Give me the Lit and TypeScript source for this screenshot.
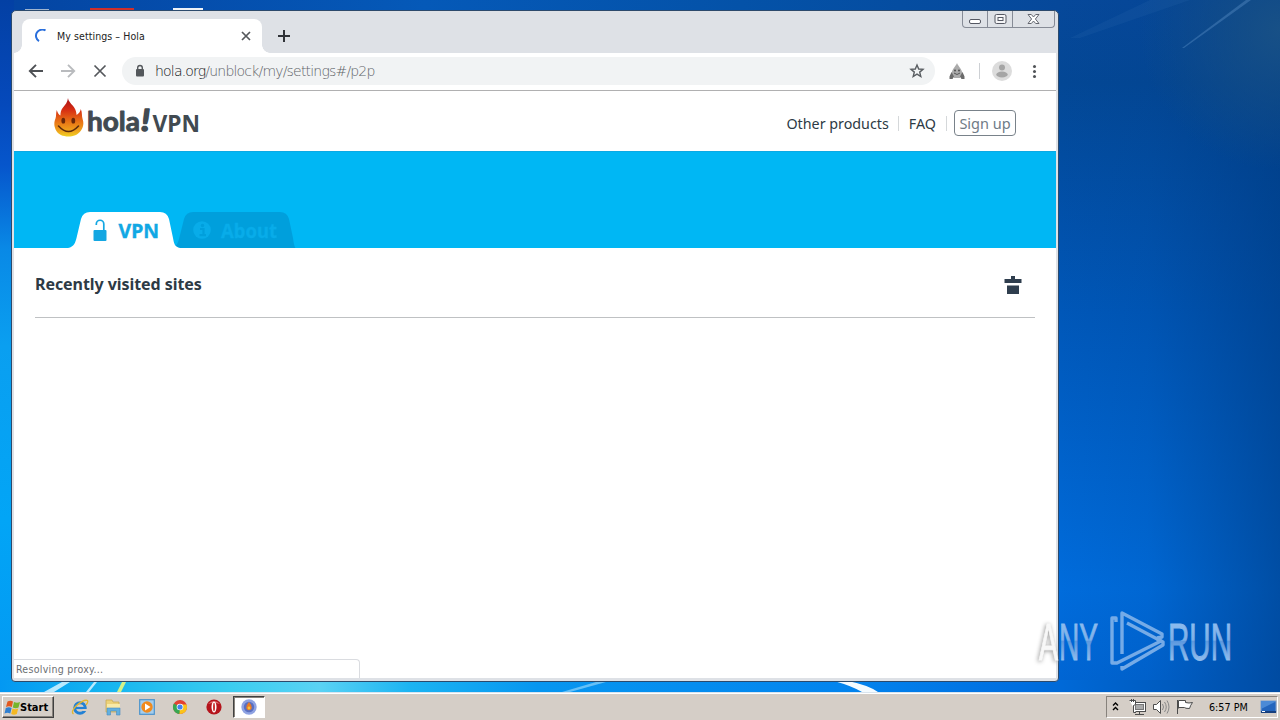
import { LitElement, html, css } from "lit";
import { customElement } from "lit/decorators.js";

@customElement("hola-logo")
class HolaLogo extends LitElement {
  static styles = css`
    :host { display: flex; align-items: flex-start; color: #414a51; }
    .flame { display: block; width: 30px; height: 40px; }
    .word { display: block; width: 118px; height: 40px; overflow: visible; }
  `;
  render() {
    return html`<svg class="flame" viewBox="0 0 30 40">
        <defs>
          <linearGradient id="f" x1="0" y1="0" x2="0" y2="1">
            <stop offset="0" stop-color="#a81218" /><stop offset=".3" stop-color="#d62d13" />
            <stop offset=".62" stop-color="#e97416" /><stop offset=".85" stop-color="#efa31c" /><stop offset="1" stop-color="#f0d023" />
          </linearGradient>
        </defs>
        <path fill="url(#f)" d="M14 0C14.500 4 18 6 20.500 10C22 12.500 22.300 14.500 22.600 17C24.800 15.500 26.500 13.500 26.800 11C28.500 15 27.600 18 28.600 21C30 25 29.500 29 27 32.500C24 37 19 38.500 14.500 38.500C9 38.500 4 36.500 1.800 32C-.5 27.500 .3 23.500 1.500 20.500C2.500 17.500 1.700 15.500 2.800 12C3.600 15 4.700 16.500 6.400 17.500C6.500 14 7 12 9 9.500C11.500 6.500 13.500 4 14 0Z" />
        <ellipse cx="9.300" cy="22.700" rx="1.900" ry="2.900" fill="#6b2708" /><ellipse cx="19.300" cy="22.700" rx="1.900" ry="2.900" fill="#6b2708" />
        <path d="M4.500 28Q14.500 39 24.500 28" fill="none" stroke="#5d2a0c" stroke-width="1.600" stroke-linecap="round" />
      </svg>
      <svg class="word" viewBox="0 0 118 40">
        <g fill="#414a51" stroke="#414a51" font-weight="700" stroke-linejoin="round">
          <text x="3" y="33" font-family="Lato, sans-serif" font-size="27" stroke-width=".9" textLength="53" lengthAdjust="spacingAndGlyphs">hola</text>
          <text x="57" y="33" font-family="Lato, sans-serif" font-size="31" font-style="italic" stroke-width="1.500" textLength="9" lengthAdjust="spacingAndGlyphs">!</text>
          <text x="68.500" y="34" font-family="Noto Sans, sans-serif" font-size="23.500" stroke-width="0" textLength="47.500" lengthAdjust="spacingAndGlyphs">VPN</text>
        </g>
      </svg>`;
  }
}

@customElement("browser-window")
class BrowserWindow extends LitElement {
  static styles = css`
    :host {
      box-sizing: border-box; display: flex; flex-direction: column; border: 1px solid #2c4a6c;
      border-radius: 5px 5px 4px 4px; background: #dee1e6; padding: 0 2px 3px;
      font-family: "DejaVu Sans Condensed", "DejaVu Sans", sans-serif; font-size: 10.500px; color: #222;
      overflow: hidden;
    }
    svg { display: block; flex: none; }
    .strip { display: flex; height: 42px; flex: none; align-items: flex-start; }
    .tab {
      box-sizing: border-box; display: flex; align-items: center; height: 34px; width: 240px; margin: 8px 0 0 8px;
      background: #fff; border-radius: 8px 8px 0 0; padding: 0 10px 0 13px; position: relative;
    }
    .tab::before, .tab::after { content: ""; position: absolute; bottom: 0; width: 8px; height: 8px; }
    .tab::before { left: -8px; background: radial-gradient(circle at 0 0, transparent 7.500px, #fff 8px); }
    .tab::after { right: -8px; background: radial-gradient(circle at 100% 0, transparent 7.500px, #fff 8px); }
    .title { margin-left: 8px; flex: 1; white-space: nowrap; letter-spacing: 0.080px; }
    .plus { margin: 18px 0 0 15px; }
    .controls { display: flex; margin-left: auto; margin-right: 1px; border: 1px solid #868b96; border-top: 0; border-radius: 0 0 4px 4px; height: 16px; }
    .controls div { display: flex; align-items: center; justify-content: center; width: 24px; }
    .controls div + div { border-left: 1px solid #868b96; }
    .controls .wide { width: 41px; }
    .toolbar { display: flex; align-items: center; box-sizing: border-box; height: 38px; padding-bottom: 1px; flex: none; background: #fff; border-bottom: 1px solid #b0b0b1; padding-left: 14px; }
    .nav { display: flex; gap: 16px; }
    .omnibox { display: flex; align-items: center; box-sizing: border-box; width: 813px; height: 28px; margin-left: 14px; background: #f1f3f4; border-radius: 14px; padding: 0 9px 0 10px; }
    .url { flex: 1; margin-left: 7px; font: 200 14px "DejaVu Sans", sans-serif; letter-spacing: -0.810px; color: #5f6468; white-space: nowrap; }
    .url b { color: #101214; font-weight: 200; }
    .ext { margin-left: 13px; }
    .sep { width: 1px; height: 16px; background: #cdd0d4; margin: 0 12px 0 13px; }
    .kebab { margin-left: 14px; }
    .page { display: flex; flex-direction: column; flex: 1; min-height: 0; background: #fff; color: #2d3a45; font-family: "Noto Sans", sans-serif; }
    .head { display: flex; height: 60px; flex: none; box-sizing: border-box; padding: 7px 40px 0 40px; }
    .links { display: flex; align-items: center; margin-left: auto; height: 50px; font-size: 14.300px; }
    .bar { width: 1px; height: 15px; background: #d5d8da; margin: 0 10px 0 9px; }
    .bar.last { margin: 0 7px 0 10px; }
    .signup { box-sizing: border-box; border: 1px solid #79828a; border-radius: 4px; width: 62px; height: 26px; line-height: 24px; text-align: center; color: #6f7b86; font-size: 14.500px; }
    .hero { display: flex; align-items: flex-end; height: 97px; flex: none; background: #00b7f4; border-top: 1px solid #0aa9e4; box-sizing: border-box; padding-left: 54px; }
    .hero svg text { font: 700 20px "Noto Sans", sans-serif; }
    .recent { display: flex; justify-content: space-between; align-items: center; box-sizing: border-box; margin: 0 21px; height: 70px; border-bottom: 1px solid #bfc1c3; padding: 4px 12px 0 0; font-size: 16px; font-weight: 700; letter-spacing: -0.060px; }
    .recent span { padding-bottom: 1px; }
    .status { box-sizing: border-box; margin-top: auto; width: 346px; height: 19px; border: 1px solid #dadce0; border-width: 1px 1px 0 0; border-radius: 0 4px 0 0; padding-left: 2px; color: #6b6f73; font: 10.500px/19px "DejaVu Sans Condensed", sans-serif; letter-spacing: 0.280px; }
  `;
  render() {
    return html`
      <div class="strip">
        <div class="tab">
          <svg width="14" height="14" viewBox="0 0 14 14"><path d="M10.500 1.500A6 6 0 0 0 4 12.200" fill="none" stroke="#2a6fdc" stroke-width="2" /></svg>
          <span class="title">My settings – Hola</span>
          <svg width="12" height="12" viewBox="0 0 12 12"><path d="M2 2L10 10M10 2L2 10" stroke="#55585c" stroke-width="1.700" /></svg>
        </div>
        <svg class="plus" width="14" height="14" viewBox="0 0 14 14"><path d="M7 1V13M1 7H13" stroke="#303338" stroke-width="2" /></svg>
        <div class="controls">
          <div><svg width="13" height="14" viewBox="0 0 13 14"><rect x=".5" y="7.500" width="11" height="4" rx="1.500" fill="#fff" stroke="#555863" /></svg></div>
          <div><svg width="13" height="13" viewBox="0 0 13 13"><rect x="1" y="1.500" width="11" height="9" rx="1.500" fill="#f4f4f6" stroke="#555863" /><rect x="4" y="4.500" width="5" height="3" fill="#fff" stroke="#555863" /></svg></div>
          <div class="wide"><svg width="13" height="12" viewBox="0 0 13 12"><path d="M1 1.500H4.300L6.500 4L8.700 1.500H12L8.400 6L12 10.500H8.700L6.500 8L4.300 10.500H1L4.600 6Z" fill="#fff" stroke="#63666f" /></svg></div>
        </div>
      </div>
      <div class="toolbar">
        <div class="nav">
          <svg width="16" height="16" viewBox="0 0 16 16"><path d="M15 8H2M8 1.800L1.800 8L8 14.200" fill="none" stroke="#4e5155" stroke-width="1.900" /></svg>
          <svg width="16" height="16" viewBox="0 0 16 16"><path d="M1 8H14M8 1.800L14.200 8L8 14.200" fill="none" stroke="#b9bbbe" stroke-width="1.900" /></svg>
          <svg width="16" height="16" viewBox="0 0 16 16"><path d="M2.500 2.500L13.500 13.500M13.500 2.500L2.500 13.500" stroke="#55585c" stroke-width="1.700" /></svg>
        </div>
        <div class="omnibox">
          <svg width="16" height="16" viewBox="0 0 16 16"><rect x="4" y="6" width="8" height="7.500" rx="1" fill="#54585c" /><path d="M5.700 6.500V4.800A2.300 2.300 0 0 1 10.300 4.800V6.500" fill="none" stroke="#54585c" stroke-width="1.400" /></svg>
          <span class="url"><b>hola.org</b>/unblock/my/settings#/p2p</span>
          <svg width="18" height="18" viewBox="0 0 18 18"><path d="M9 3L10.700 7L15 7.300L11.700 10.100L12.800 14.500L9 12.100L5.200 14.500L6.300 10.100L3 7.300L7.300 7Z" fill="none" stroke="#5a5e62" stroke-width="1.400" /></svg>
        </div>
        <svg class="ext" width="18" height="18" viewBox="0 0 18 18">
          <path d="M9 1C10 4 14 7 14.500 12L12 16H6L3.500 12C4 7 8 4 9 1Z" fill="#ababab" />
          <path d="M3.500 10L1.500 14.500V17H4.500L6 14.500ZM14.500 10L16.500 14.500V17H13.500L12 14.500Z" fill="#6b6b6b" />
          <circle cx="7" cy="8.500" r="1" fill="#4d4d4d" /><circle cx="11" cy="8.500" r="1" fill="#4d4d4d" /><path d="M6 11Q9 14 12 11" fill="none" stroke="#555" />
        </svg>
        <div class="sep"></div>
        <svg width="20" height="20" viewBox="0 0 20 20"><circle cx="10" cy="10" r="10" fill="#dcdcdc" /><circle cx="10" cy="6.500" r="3" fill="#a5a5a5" /><ellipse cx="10" cy="13.500" rx="5.700" ry="3" fill="#a5a5a5" /></svg>
        <svg class="kebab" width="16" height="16" viewBox="0 0 16 16" fill="#505357"><circle cx="8.500" cy="3.500" r="1.500" /><circle cx="8.500" cy="8.500" r="1.500" /><circle cx="8.500" cy="13.500" r="1.500" /></svg>
      </div>
      <div class="page">
        <div class="head">
          <hola-logo></hola-logo>
          <div class="links"><span>Other products</span><i class="bar"></i><span>FAQ</span><i class="bar last"></i><span class="signup">Sign up</span></div>
        </div>
        <div class="hero">
          <svg width="230" height="37" viewBox="0 0 230 37">
            <path d="M105 37C109 35 110 31 111 28L116 8Q118 1 125 1H212Q219 1 221 8L225 27Q226 35 227.500 37Z" fill="#009fdc" />
            <path d="M0 37C6 36 7.500 31 8.500 27L13 8Q15 1 22 1H92Q99 1 101 8L105 27C106 33 107 36 112 37Z" fill="#fff" />
            <rect x="25.500" y="19" width="13" height="11" rx="1" fill="#14a7e2" />
            <path d="M28.300 14V13A3.700 3.700 0 0 1 35.800 13V19" fill="none" stroke="#14a7e2" stroke-width="1.700" />
            <text x="50.500" y="27" fill="#11a8e4" stroke="#11a8e4" stroke-width=".4" textLength="40.500" lengthAdjust="spacingAndGlyphs">VPN</text>
            <circle cx="134" cy="19" r="8.800" fill="#08ace9" /><circle cx="134.500" cy="14.500" r="1.700" fill="#009fdc" /><path d="M132 18H135.500V24M131.500 24.200H138" fill="none" stroke="#009fdc" stroke-width="2.200" />
            <text x="153" y="27" fill="#08ace9" stroke="#08ace9" stroke-width=".3" textLength="56" lengthAdjust="spacingAndGlyphs">About</text>
          </svg>
        </div>
        <div class="recent"><span>Recently visited sites</span>
          <svg width="20" height="20" viewBox="0 0 20 20"><path d="M1.500 4H8V1H12V4H18.500V8H1.500ZM4 10.500H16V19H4Z" fill="#2f3e4e" /></svg>
        </div>
        <div class="status">Resolving proxy...</div>
      </div>`;
  }
}

@customElement("task-bar")
class TaskBar extends LitElement {
  static styles = css`
    :host { display: flex; align-items: center; box-sizing: border-box; height: 28px; background: #d5cec7; border-top: 1px solid #d9e4ee; box-shadow: inset 0 1px #fff; font: 11px "DejaVu Sans Condensed", sans-serif; color: #000; padding: 1px 2px 0 2px; }
    svg { display: block; flex: none; }
    .start { display: flex; align-items: center; box-sizing: border-box; width: 52px; height: 22px; padding-left: 1px; border: 1px solid; border-color: #fff #404040 #404040 #fff; box-shadow: inset -1px -1px #87827c; font-weight: 700; letter-spacing: 0; }
    .start span { margin-left: -1px; }
    .apps { display: flex; align-items: center; margin-left: 17px; gap: 16px; }
    .opera { margin-left: 1px; }
    .active { box-sizing: border-box; display: flex; align-items: center; justify-content: center; width: 32px; height: 22px; margin-left: -5px; background: #fff; border: 1px solid; border-color: #404040 #fff #fff #404040; box-shadow: inset 1px 1px #87827c; }
    .tray { display: flex; align-items: center; justify-content: space-between; box-sizing: border-box; margin-left: auto; height: 22px; width: 172px; border: 1px solid; border-color: #87827c #fff #fff #87827c; padding: 0 0 0 4px; }
    .status { display: flex; align-items: center; }
    .clock { margin-left: 8px; white-space: nowrap; letter-spacing: 0; font-size: 10.700px; }
  `;
  render() {
    return html`
      <div class="start">
        <svg width="17" height="17" viewBox="0 0 17 17"><path d="M3.500 2.500Q6.500 1 9 2.500L7.800 8Q5 6.500 2 8Z" fill="#e2581f" /><path d="M10 3Q13 4.500 16 3L14.500 8.500Q12 10 8.800 8.500Z" fill="#76b52c" /><path d="M1.800 9Q5 7.500 7.600 9L6.300 14.500Q3.500 13 .5 14.500Z" fill="#2f7fd0" /><path d="M8.500 9.500Q11.500 11 14.200 9.500L12.800 15Q10 16.500 7.200 15Z" fill="#f5b822" /></svg>
        <span>Start</span>
      </div>
      <div class="apps">
        <svg width="18" height="18" viewBox="0 0 18 18"><circle cx="9" cy="10" r="5.300" fill="none" stroke="#2381d4" stroke-width="3" /><path d="M5 10H14.500" stroke="#2381d4" stroke-width="2.200" /><path d="M11.500 12H16" stroke="#d5cec7" stroke-width="2" /><path d="M2.500 16Q-.5 14 5 8Q13 1 16.500 2.500Q17.500 4 15 7" fill="none" stroke="#e2b62e" stroke-width="1.300" /></svg>
        <svg width="18" height="18" viewBox="0 0 18 18"><path d="M1 2H7L8 4H14V14H1Z" fill="#ecd27a" stroke="#c7a64a" stroke-width=".7" /><path d="M2 6H15V10H2Z" fill="#f8eaa8" /><path d="M2 17V10H15V17H11.500V13H5.500V17Z" fill="#62b0df" stroke="#4a8cc0" stroke-width=".6" /></svg>
        <svg width="16" height="16" viewBox="0 0 16 16"><rect x=".7" y=".7" width="14.600" height="14.600" fill="#a5cdec" stroke="#4b93cc" stroke-width="1.200" /><circle cx="8" cy="8" r="5.700" fill="#f08a1d" /><path d="M6 4.500L11.500 8L6 11.500Z" fill="#fff" /></svg>
        <svg width="18" height="16" viewBox="0 0 18 16"><circle cx="9" cy="8" r="7" fill="#e34133" /><path d="M9 8L2.900 4.500A7 7 0 0 0 8 15L12 9.700Z" fill="#38a752" /><path d="M9 8L8.500 15A7 7 0 0 0 15.500 5.500H9Z" fill="#fbc41a" /><circle cx="9" cy="8" r="3.300" fill="#fff" /><circle cx="9" cy="8" r="2.600" fill="#4483ee" /></svg>
        <svg class="opera" width="16" height="16" viewBox="0 0 16 16"><circle cx="8" cy="8" r="7.600" fill="#b5141c" /><path d="M2 5Q8-1 14 5Q8 3 2 5Z" fill="#e06a6c" /><ellipse cx="8" cy="8" rx="2.500" ry="5.500" fill="#fff" /><ellipse cx="8" cy="8" rx="1" ry="4.300" fill="#c33" /></svg>
        <div class="active"><svg width="16" height="16" viewBox="0 0 16 16"><circle cx="8" cy="8" r="7.700" fill="#8ea2e2" /><circle cx="8" cy="8" r="5.200" fill="#5a6fc0" /><path d="M8 3Q11 6 10.800 9A2.900 3 0 0 1 5.200 9Q5 6 8 3Z" fill="#ea7a24" /><circle cx="8" cy="9" r="1.400" fill="#f5c33a" /></svg></div>
      </div>
      <div class="tray">
        <div class="status">
          <svg width="10" height="12" viewBox="0 0 10 12"><path d="M2 4.500L4.500 2L7 4.500M2 9L4.500 6.500L7 9" fill="none" stroke="#000" stroke-width="1.400" /></svg>
          <svg width="80" height="18" viewBox="0 0 80 18" fill="#fff" stroke="#4c4c4c">
            <rect x="12.500" y="4.500" width="12" height="9" /><rect x="14.500" y="6.500" width="8" height="5" fill="#aaa" stroke="#777" /><path d="M14 16.500H23M18.500 13.500V16" /><path d="M8.500 2.500H14.500V6.500L12.500 7.500V14.500H15" /><path d="M10.500 1V4M12.500 1V4" />
            <path d="M32.500 6.500H35.500L39.500 2.500V15.500L35.500 11.500H32.500Z" /><path d="M41.500 6Q43.500 9 41.500 12M43.500 4Q47 9 43.500 14M46 2.500Q50 9 46 15.500" fill="none" stroke="#888" />
            <path d="M57.500 10.500V2.500H64.500V4.500Q68 5.500 71.500 4.500Q69.500 7 68.500 10.500Q64 10.500 63.500 9.500H57.500" /><path d="M56.500 2V16" />
          </svg>
          <span class="clock">6:57 PM</span>
        </div>
        <svg width="17" height="14" viewBox="0 0 17 14"><rect x="1" y="1" width="15" height="11" fill="#2465bd" stroke="#7c9cc9" /><path d="M1 9L15 2V1H1Z" fill="#4c8ad6" /><path d="M1 11H16V13H1Z" fill="#173f7e" /><path d="M2 11H5V12H2Z" fill="#fff" /></svg>
      </div>`;
  }
}

@customElement("app-root")
class AppRoot extends LitElement {
  static styles = css`
    :host { display: flex; flex-direction: column; position: relative; width: 1280px; height: 720px; overflow: hidden; background: #0054b4; }
    .desk { flex: 1; min-height: 0; }
    .desk svg { display: block; }
    browser-window { position: absolute; left: 11px; top: 10px; width: 1048px; height: 672px; }
    .mark { position: absolute; left: 1030px; top: 600px; }
    .over-page { filter: drop-shadow(-1px 1px 2px #999); }
  `;
  render() {
    return html`
      <div class="desk">
        <svg width="1280" height="692" viewBox="0 0 1280 692">
          <defs>
            <linearGradient id="sky" x1="0" y1="0" x2="0" y2="1"><stop offset="0" stop-color="#06489a" /><stop offset=".12" stop-color="#034795" /><stop offset=".45" stop-color="#0057b8" /><stop offset=".85" stop-color="#006cdc" /><stop offset="1" stop-color="#0064d2" /></linearGradient>
            <linearGradient id="edge" x1="1059" y1="0" x2="1280" y2="0" gradientUnits="userSpaceOnUse"><stop offset="0" stop-color="#003a80" stop-opacity="0" /><stop offset=".4" stop-color="#003a80" stop-opacity=".1" /><stop offset="1" stop-color="#003a80" stop-opacity=".6" /></linearGradient>
            <radialGradient id="haze" cx="1280" cy="30" r="140" gradientUnits="userSpaceOnUse"><stop offset="0" stop-color="#1a5286" stop-opacity=".9" /><stop offset="1" stop-color="#1a5286" stop-opacity="0" /></radialGradient>
            <linearGradient id="left" x1="0" y1="0" x2="0" y2="1"><stop offset="0" stop-color="#0340a4" /><stop offset=".15" stop-color="#0549bb" /><stop offset=".24" stop-color="#0656cc" /><stop offset=".36" stop-color="#0989e6" /><stop offset=".5" stop-color="#0a9ff0" /><stop offset=".75" stop-color="#02a5f6" /><stop offset="1" stop-color="#0398f2" /></linearGradient>
            <linearGradient id="floor" x1="0" y1="0" x2="1" y2="0"><stop offset="0" stop-color="#0398f2" /><stop offset=".08" stop-color="#14b4f0" /><stop offset=".18" stop-color="#3bcdf0" /><stop offset=".25" stop-color="#5ad2f4" /><stop offset=".32" stop-color="#1cb4f2" /><stop offset=".42" stop-color="#0796f0" /><stop offset=".66" stop-color="#0384ee" /><stop offset=".8" stop-color="#006ee0" /><stop offset="1" stop-color="#004ca4" /></linearGradient>
            <linearGradient id="top" x1="0" y1="0" x2="1" y2="0"><stop offset="0" stop-color="#0444a2" /><stop offset=".4" stop-color="#0559b8" /><stop offset=".7" stop-color="#0452a8" /><stop offset="1" stop-color="#06489a" /></linearGradient>
          </defs>
          <rect width="1280" height="692" fill="url(#sky)" />
          <rect x="1050" width="230" height="692" fill="url(#edge)" />
          <rect x="1120" width="160" height="180" fill="url(#haze)" />
          <rect width="1060" height="14" fill="url(#top)" />
          <rect width="14" height="692" fill="url(#left)" />
          <rect y="680" width="1280" height="12" fill="url(#floor)" />
          <path d="M1182 48L1246 0H1251L1184 48Z" fill="#5d92c8" opacity=".4" />
          <path d="M1070 38L1150 0H1190L1080 38Z" fill="#3e78b8" opacity=".13" />
          <path d="M44 692L62 682H70L54 692ZM86 692L94 682H97L89 692Z" fill="#d8f4ff" opacity=".85" />
          <path d="M117 692L122 682H126L121 692Z" fill="#d3f28a" />
          <path d="M562 692L596 682H606L570 692Z" fill="#8fd3fa" opacity=".7" />
          <path d="M834 681H848Q868 685 878 692H862Q852 686 834 681Z" fill="#f4fbff" />
          <rect x="25" y="9" width="24" height="2" fill="#9fb4cf" /><rect x="90" y="8" width="44" height="3" fill="#cf2f2b" /><rect x="173" y="8" width="30" height="3" fill="#eef2f7" />
        </svg>
      </div>
      <task-bar></task-bar>
      <browser-window></browser-window>
      <svg class="mark" width="230" height="80" viewBox="0 0 230 80">
        <defs><linearGradient id="wm" x1="0" y1="22" x2="0" y2="60" gradientUnits="userSpaceOnUse"><stop offset="0" stop-color="#8dbcee" /><stop offset=".48" stop-color="#7eb0e8" /><stop offset=".5" stop-color="#5b98de" /><stop offset="1" stop-color="#8fbcec" /></linearGradient></defs>
        <g font-family="Liberation Sans Narrow, Liberation Sans, sans-serif" font-size="52" fill="url(#wm)" stroke="url(#wm)" stroke-width="1">
          <text class="over-page" x="9" y="59.500" fill="#f8f8f8" stroke="#f8f8f8" textLength="19" lengthAdjust="spacingAndGlyphs">A</text>
          <text x="29" y="59.500" textLength="39" lengthAdjust="spacingAndGlyphs">NY</text>
          <text x="138" y="59.500" textLength="64" lengthAdjust="spacingAndGlyphs">RUN</text>
        </g>
        <g fill="none" stroke="#82b3ea" stroke-width="3.400" stroke-linejoin="round" opacity=".9">
          <path d="M86 22V18H82V63H87L131 41L97 23" />
          <path d="M92 54V13L132 34V37L127 38" /><path d="M92 66V69L133 45V42L127 39" />
        </g>
      </svg>`;
  }
}
